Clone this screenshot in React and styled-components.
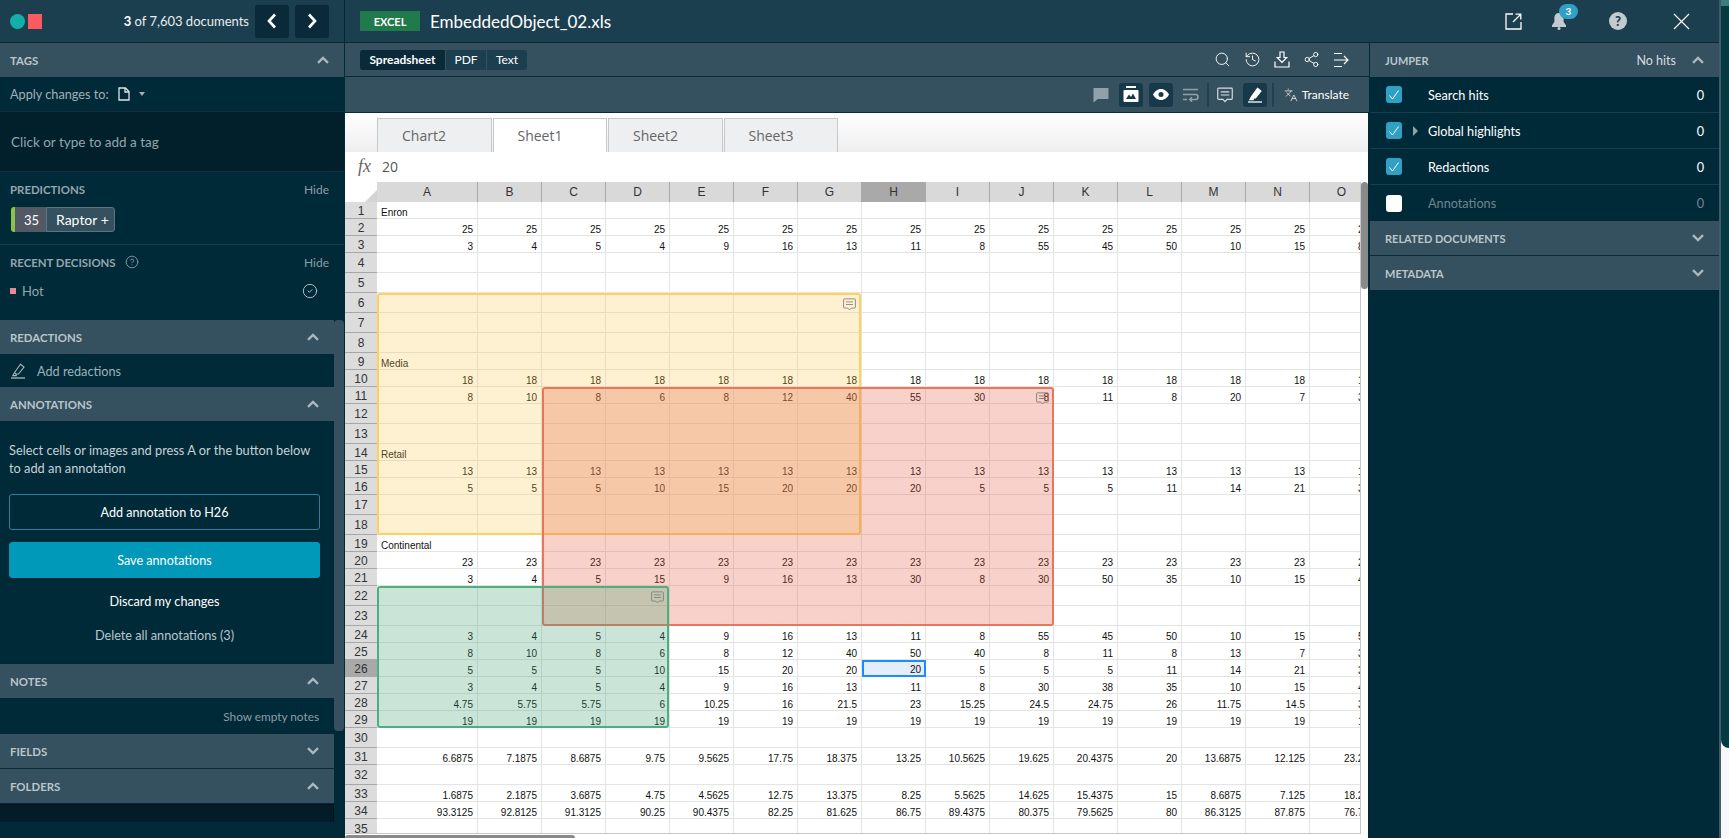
import React from "react";
import styled, { createGlobalStyle } from "styled-components";
import { CircleCheck, CircleHelp, History, Languages, Search, Share2 } from "lucide-react";

const GlobalStyle = createGlobalStyle`
  html, body {
    margin: 0;
    height: 100%;
    overflow: hidden;
    background: #fff;
  }
  #root {
    height: 100%;
  }
  * {
    box-sizing: border-box;
  }
`;

const DARK = "#012a39";
const BAR = "#1c3f50";
const HEAD = "#35505e";

const colLetters = "ABCDEFGHIJKLMNO".split("");

const rowHeights = [
  17, 17, 17, 20, 20, 20, 20, 20, 17, 17, 17, 20, 20, 17, 17, 17, 20, 20, 17, 17, 17, 20, 20, 17, 17, 17, 17, 17, 17, 20,
  17, 20, 17, 17, 20,
];

const fill = (v) => Array(15).fill(v);

// numbers from the sheet, keyed by row number
const cells = {
  2: fill(25),
  3: [3, 4, 5, 4, 9, 16, 13, 11, 8, 55, 45, 50, 10, 15, 80],
  10: fill(18),
  11: [8, 10, 8, 6, 8, 12, 40, 55, 30, 8, 11, 8, 20, 7, 30],
  15: fill(13),
  16: [5, 5, 5, 10, 15, 20, 20, 20, 5, 5, 5, 11, 14, 21, 30],
  20: fill(23),
  21: [3, 4, 5, 15, 9, 16, 13, 30, 8, 30, 50, 35, 10, 15, 40],
  24: [3, 4, 5, 4, 9, 16, 13, 11, 8, 55, 45, 50, 10, 15, 50],
  25: [8, 10, 8, 6, 8, 12, 40, 50, 40, 8, 11, 8, 13, 7, 30],
  26: [5, 5, 5, 10, 15, 20, 20, 20, 5, 5, 5, 11, 14, 21, 30],
  27: [3, 4, 5, 4, 9, 16, 13, 11, 8, 30, 38, 35, 10, 15, 40],
  28: [4.75, 5.75, 5.75, 6, 10.25, 16, 21.5, 23, 15.25, 24.5, 24.75, 26, 11.75, 14.5, 30],
  29: fill(19),
  31: [6.6875, 7.1875, 8.6875, 9.75, 9.5625, 17.75, 18.375, 13.25, 10.5625, 19.625, 20.4375, 20, 13.6875, 12.125, 23.25],
  33: [1.6875, 2.1875, 3.6875, 4.75, 4.5625, 12.75, 13.375, 8.25, 5.5625, 14.625, 15.4375, 15, 8.6875, 7.125, 18.25],
  34: [93.3125, 92.8125, 91.3125, 90.25, 90.4375, 82.25, 81.625, 86.75, 89.4375, 80.375, 79.5625, 80, 86.3125, 87.875, 76.75],
};

const labels = { 1: "Enron", 9: "Media", 14: "Retail", 19: "Continental" };

const Chevron = ({ up }) => (
  <svg width="12" height="8" viewBox="0 0 12 8" fill="none" stroke="#a9b8bf" strokeWidth="2.4">
    <path d={up ? "M1 6.8 6 2l5 4.8" : "M1 1.2 6 6l5-4.8"} />
  </svg>
);

const NavArrow = ({ right }) => (
  <svg width="10" height="16" viewBox="0 0 10 16" fill="none" stroke="#fff" strokeWidth="2.6">
    <path d={right ? "M2 1.5 8 8l-6 6.5" : "M8 1.5 2 8l6 6.5"} />
  </svg>
);

const DocIcon = () => (
  <svg width="12" height="14" viewBox="0 0 12 14" fill="none" stroke="#dfe5e8" strokeWidth="1.3">
    <path d="M1 1h6.5L11 4.5V13H1z" />
    <path d="M7 1v4h4" />
  </svg>
);

const HighlightIcon = ({ solid }) => (
  <svg width="16" height="16" viewBox="0 0 16 16" fill={solid ? "#fff" : "none"} stroke={solid ? "#fff" : "#a9b8bf"} strokeWidth="1.1">
    <path d="M10.5 1.2 14 4 8.5 11H5.5L4.7 9.2z" />
    <path d="M4.7 9.2 2.8 12.6h3.4l.4-1.2" />
    <path d="M1 15h14" strokeWidth="1.3" />
  </svg>
);

const CommentOutline = ({ size = 15, color = "#d5dde1" }) => (
  <svg width={size} height={size} viewBox="0 0 15 15" fill="none" stroke={color} strokeWidth="1.1">
    <path d="M1.5 1h12a.8.8 0 0 1 .8.8v9a.8.8 0 0 1-.8.8H9.5l-2 2.2-2-2.2h-4a.8.8 0 0 1-.8-.8v-9a.8.8 0 0 1 .8-.8z" />
    <path d="M3.5 4.5h8M3.5 7.5h8" />
  </svg>
);

const ExternalIcon = () => (
  <svg width="17" height="17" viewBox="0 0 17 17" fill="none" stroke="#fff" strokeWidth="1.3">
    <path d="M8 1H1v15h15V9" />
    <path d="M8 9 15.5 1.5M10.5 1.2h5.3v5.3" />
  </svg>
);

const BellIcon = () => (
  <svg width="16" height="18" viewBox="0 0 16 18" fill="#c3cbcf">
    <path d="M8 1C5 1 3.4 3.2 3.4 6.2v3.6L1 13.4V15h14v-1.6l-2.4-3.6V6.2C12.600 3.2 11 1 8 1z" />
    <circle cx="8" cy="16.400" r="1.500" />
  </svg>
);

const CloseIcon = () => (
  <svg width="17" height="17" viewBox="0 0 17 17" fill="none" stroke="#fff" strokeWidth="1.100">
    <path d="M1 1l15 15M16 1 1 16" />
  </svg>
);

const DownloadIcon = () => (
  <svg width="16" height="17" viewBox="0 0 16 17" fill="none" stroke="#fff" strokeWidth="1.200">
    <path d="M6 1h4v5.500h2.800L8 11.500 3.200 6.500H6z" />
    <path d="M1 10.500V16h14v-5.500" />
  </svg>
);

const ExitIcon = () => (
  <svg width="16" height="16" viewBox="0 0 16 16" fill="none" stroke="#fff" strokeWidth="1.200">
    <path d="M1 1.500h8M1 14.500h8M1 8h13.500M11 4l4 4-4 4" />
  </svg>
);

const FlagIcon = () => (
  <svg width="16" height="16" viewBox="0 0 16 16" fill="#8fa2ab">
    <path d="M.5 1h15v11H5l-4.500 3.500z" />
  </svg>
);

const ImageIcon = () => (
  <svg width="16" height="17" viewBox="0 0 16 17">
    <path d="M3 0h10v2H3z" fill="#fff" />
    <path d="M1.500 4h13a1 1 0 0 1 1 1v10a1 1 0 0 1-1 1h-13a1 1 0 0 1-1-1V5a1 1 0 0 1 1-1z" fill="#fff" />
    <path d="M3 13l3-4.500 2 2.500 2-3.500L13 13z" fill="#17394a" />
  </svg>
);

const EyeIcon = () => (
  <svg width="16" height="11" viewBox="0 0 16 11">
    <path d="M8 0c3.500 0 6.500 2.500 8 5.500-1.500 3-4.500 5.500-8 5.500S1.500 8.500 0 5.500C1.500 2.500 4.500 0 8 0z" fill="#fff" />
    <circle cx="8" cy="5.500" r="2.500" fill="#17394a" />
  </svg>
);

const WrapIcon = () => (
  <svg width="16" height="14" viewBox="0 0 16 14" fill="none" stroke="#8fa2ab" strokeWidth="1.600">
    <path d="M0 1.500h15M0 6.500h12.500a2.200 2.200 0 0 1 0 5H7M9 9.300 6.800 11.500 9 13.700M0 11.500h4" />
  </svg>
);

const Page = styled.div`
  display: flex;
  width: 1729px;
  height: 838px;
  overflow: hidden;
  font-family: Lato, "Open Sans", sans-serif;
  background: ${DARK};
`;

const Sidebar = styled.aside`
  display: flex;
  flex-direction: column;
  width: 344px;
  flex: none;
  background: ${DARK};
`;

const SideTop = styled.div`
  display: flex;
  align-items: center;
  height: 43px;
  flex: none;
  padding: 0 15px 0 10px;
  background: ${BAR};
  border-bottom: 1px solid #0b2a38;
`;

const LogoDot = styled.span`
  width: 15px;
  height: 15px;
  border-radius: 50%;
  background: #14b0a8;
`;

const LogoSquare = styled.span`
  width: 14px;
  height: 15px;
  margin-left: 3px;
  background: #fb5a60;
`;

const DocCount = styled.span`
  margin-left: auto;
  margin-right: 6px;
  color: #e8edef;
  font-size: 13px;
  b {
    color: #fff;
  }
`;

const NavButton = styled.button`
  display: flex;
  align-items: center;
  justify-content: center;
  width: 34px;
  height: 33px;
  margin-left: ${(p) => p.$gap || 0}px;
  padding: 0;
  border: none;
  border-radius: 3px;
  background: #0a2a3a;
`;

const SectionHeader = styled.div`
  display: flex;
  align-items: center;
  justify-content: space-between;
  height: 34px;
  flex: none;
  padding: 0 15px 0 ${(p) => p.$left || 10}px;
  background: ${HEAD};
  color: #b9c6cc;
  font-size: ${(p) => p.$size || 11.4}px;
  font-weight: 700;
  text-transform: uppercase;
`;

const HeaderRight = styled.span`
  display: flex;
  align-items: center;
  gap: 16px;
  color: #d5dde1;
  font-size: 12.5px;
  font-weight: 400;
  text-transform: none;
`;

const ApplyRow = styled.div`
  display: flex;
  align-items: center;
  gap: 9px;
  height: 35px;
  flex: none;
  padding: 0 10px;
  color: #9fb0b8;
  font-size: 12.7px;
  border-bottom: 1px solid #0f2f3e;
`;

const Caret = styled.span`
  width: 0;
  height: 0;
  border-left: 3.500px solid transparent;
  border-right: 3.500px solid transparent;
  border-top: 4px solid #9fb0b8;
`;

const TagInput = styled.div`
  display: flex;
  align-items: center;
  height: 60px;
  flex: none;
  padding: 0 11px;
  background: #021f2c;
  color: #93a5ae;
  font-size: 13.5px;
  border-bottom: 1px solid #10303f;
`;

const InfoBlock = styled.div`
  height: ${(p) => p.$h}px;
  flex: none;
  padding: 0 15px 0 10px;
  border-bottom: ${(p) => (p.$line ? "1px solid #1a3d4d" : "none")};
`;

const InfoTitle = styled.div`
  display: flex;
  align-items: center;
  justify-content: space-between;
  height: 34px;
  color: #93a5ae;
  font-size: 11.4px;
  font-weight: 700;
  text-transform: uppercase;
`;

const TitleLeft = styled.span`
  display: flex;
  align-items: center;
  gap: 9px;
`;

const HideLink = styled.span`
  color: #8b9ea7;
  font-size: 12px;
  font-weight: 400;
  text-transform: none;
`;

const Chip = styled.div`
  display: inline-flex;
  height: 25px;
  margin-top: 1px;
  margin-left: 1px;
  font-size: 13px;
  color: #fff;
`;

const ChipScore = styled.span`
  display: flex;
  align-items: center;
  justify-content: center;
  width: 35px;
  padding-left: 2px;
  border-left: 4px solid #8bc34a;
  border-radius: 3px 0 0 3px;
  background: #525864;
`;

const ChipName = styled.span`
  display: flex;
  align-items: center;
  gap: 6px;
  width: 69px;
  padding-left: 9px;
  border: 1px solid #5a7684;
  border-radius: 0 3px 3px 0;
  background: ${HEAD};
  font-size: 14px;
`;

const DecisionRow = styled.div`
  display: flex;
  align-items: center;
  justify-content: space-between;
  height: 24px;
  margin-top: 0;
  padding-right: 12px;
  color: #93a5ae;
  font-size: 13px;
`;

const DecisionName = styled.span`
  display: flex;
  align-items: center;
  gap: 6px;
`;

const HotMark = styled.i`
  width: 6px;
  height: 6px;
  background: #e58a9b;
`;

const ScrollArea = styled.div`
  display: flex;
  flex: 1;
  min-height: 0;
`;

const ScrollContent = styled.div`
  display: flex;
  flex-direction: column;
  width: 334px;
  flex: none;
`;

const ScrollThumb = styled.div`
  width: 10px;
  height: 411px;
  border-radius: 4px;
  background: ${HEAD};
`;

const AddRow = styled.div`
  display: flex;
  align-items: center;
  gap: 11px;
  height: 33px;
  flex: none;
  padding: 0 10px;
  color: #9fb0b8;
  font-size: 12.7px;
`;

const AnnotationBody = styled.div`
  display: flex;
  flex-direction: column;
  height: 243px;
  flex: none;
  padding: 21px 14px 0 9px;
  font-size: 12.8px;
`;

const HelpText = styled.p`
  margin: 0 0 17px;
  color: #c6d1d6;
  line-height: 17.500px;
`;

const WideButton = styled.button`
  height: 36px;
  flex: none;
  padding: 0;
  border-radius: 3px;
  border: 1px solid ${(p) => (p.$primary ? "#0199ba" : "#2a7f9c")};
  background: ${(p) => (p.$primary ? "#0199ba" : "transparent")};
  color: #fff;
  font-family: inherit;
  font-size: 12.6px;
  margin-bottom: 12px;
`;

const CenterLink = styled.div`
  margin-top: ${(p) => p.$top}px;
  text-align: center;
  line-height: 18px;
  color: ${(p) => p.$color};
  font-size: 12.7px;
`;

const NotesRow = styled.div`
  display: flex;
  align-items: center;
  justify-content: flex-end;
  height: 36px;
  flex: none;
  padding-right: 15px;
  color: #8b9ea7;
  font-size: 11.8px;
`;

const FolderBox = styled.div`
  height: 18px;
  flex: none;
  margin-top: 1px;
  background: #041c28;
  border-top: 1px solid #0c0f14;
  border-right: 1px solid #0c0f14;
`;

const Content = styled.div`
  display: flex;
  flex-direction: column;
  width: 1374px;
  flex: none;
  margin-left: 1px;
  background: ${DARK};
`;

const TopBar = styled.header`
  display: flex;
  align-items: center;
  height: 43px;
  flex: none;
  padding-left: 15px;
  background: ${BAR};
  border-bottom: 1px solid #0b2a38;
`;

const TypeBadge = styled.span`
  display: flex;
  align-items: center;
  justify-content: center;
  width: 60px;
  height: 20px;
  background: #217a4b;
  color: #fff;
  font-size: 11px;
  font-weight: 700;
`;

const FileName = styled.span`
  margin-left: 10px;
  color: #fff;
  font-size: 17px;
`;

const TopIcons = styled.div`
  display: flex;
  align-items: center;
  margin-left: auto;
  margin-right: 29px;
`;

const TopIcon = styled.span`
  position: relative;
  display: flex;
  align-items: center;
  justify-content: center;
  width: 18px;
  height: 18px;
  margin-left: ${(p) => p.$gap || 0}px;
`;

const BellBadge = styled.span`
  position: absolute;
  top: -8px;
  left: 9px;
  width: 19px;
  height: 15px;
  border-radius: 7.500px;
  background: #31a0c5;
  color: #fff;
  font-size: 10px;
  font-weight: 700;
  line-height: 15px;
  text-align: center;
`;

const HelpDot = styled.span`
  width: 18px;
  height: 18px;
  border-radius: 50%;
  background: #c3cbcf;
  color: ${BAR};
  font-size: 13px;
  font-weight: 900;
  line-height: 18px;
  text-align: center;
`;

const Body = styled.div`
  display: flex;
  flex: 1;
  min-height: 0;
`;

const Center = styled.main`
  display: flex;
  flex-direction: column;
  width: 1024px;
  flex: none;
`;

const ViewBar = styled.div`
  display: flex;
  align-items: center;
  height: 34px;
  flex: none;
  padding: 0 20px 0 15px;
  background: ${HEAD};
  border-bottom: 1px solid #0b2a38;
`;

const ViewTabs = styled.div`
  display: flex;
  gap: 1px;
`;

const ViewTab = styled.span`
  display: flex;
  align-items: center;
  justify-content: center;
  width: ${(p) => p.$w}px;
  height: 20px;
  border-radius: ${(p) => p.$r || "0"};
  background: ${(p) => (p.$active ? "#0a2a3a" : "#1c3f50")};
  color: #fff;
  font-size: 12px;
  font-weight: ${(p) => (p.$active ? 700 : 400)};
`;

const ToolIcons = styled.div`
  display: flex;
  align-items: center;
  margin-left: auto;
  gap: 13px;
`;

const ToolBar = styled.div`
  display: flex;
  align-items: center;
  justify-content: flex-end;
  height: 36px;
  flex: none;
  padding-right: 20px;
  background: ${HEAD};
  border-bottom: 1px solid #0b2a38;
`;

const ToolButton = styled.span`
  display: flex;
  align-items: center;
  justify-content: center;
  width: 24px;
  height: 24px;
  margin-left: ${(p) => p.$gap ?? 6}px;
  border-radius: 3px;
  background: ${(p) => (p.$on ? "#17394a" : "transparent")};
`;

const ToolSep = styled.i`
  width: 2px;
  height: 24px;
  margin-left: ${(p) => p.$gap ?? 6}px;
  background: #1f4252;
`;

const TranslateLabel = styled.span`
  display: flex;
  align-items: center;
  gap: 4px;
  margin-left: 10px;
  color: #fff;
  font-size: 12px;
`;

const Sheet = styled.section`
  position: relative;
  display: flex;
  flex-direction: column;
  flex: 1;
  min-height: 0;
  margin-right: 1px;
  background: #fff;
`;

const SheetTabs = styled.div`
  display: flex;
  align-items: flex-end;
  gap: 1px;
  height: 39px;
  flex: none;
  padding-left: 32px;
  background: linear-gradient(#fff, #eee);
`;

const SheetTab = styled.div`
  display: flex;
  align-items: center;
  width: 114.500px;
  height: 34px;
  padding-left: 24px;
  border: 1px solid #c6c8ca;
  border-bottom: none;
  background: ${(p) => (p.$active ? "#fff" : "#eeeff1")};
  color: #666;
  font-family: "Open Sans", sans-serif;
  font-size: 14px;
`;

const FxBar = styled.div`
  display: flex;
  align-items: center;
  height: 30px;
  flex: none;
  padding: 0 0 2px 13px;
  color: #555;
  font-family: "Open Sans", sans-serif;
  font-size: 14px;
`;

const FxMark = styled.i`
  width: 24px;
  color: #666;
  font-family: "Liberation Serif", serif;
  font-size: 18px;
`;

const GridRow = styled.div`
  display: flex;
  flex: 1;
  min-height: 0;
  margin-bottom: 4px;
`;

const GridWrap = styled.div`
  position: relative;
  width: 1016px;
  flex: none;
  overflow: hidden;
  border-right: 1px solid #c8c8c8;
  border-bottom: 1px solid #c8c8c8;
`;

const Table = styled.table`
  width: 1029px;
  table-layout: fixed;
  border-collapse: separate;
  border-spacing: 0;
  font-family: "Liberation Sans", Arial, sans-serif;
`;

const CornerCell = styled.th`
  position: relative;
  height: 20px;
  padding: 0;
  background: #fff;
  &::after {
    content: "";
    position: absolute;
    right: 0;
    bottom: 0;
    border-left: 12px solid transparent;
    border-bottom: 12px solid #d4d4d4;
  }
`;

const ColHead = styled.th`
  height: 20px;
  padding: 0;
  border-right: 1px solid #a8a8a8;
  background: ${(p) => (p.$on ? "#a9a9a9" : "#d9d9d9")};
  color: #333;
  font-size: 12px;
  font-weight: 400;
`;

const RowHead = styled.th`
  height: ${(p) => p.$h}px;
  padding: 2px 0 0;
  border-bottom: 1px solid #a8a8a8;
  background: ${(p) => (p.$on ? "#a9a9a9" : "#dcdcdc")};
  color: #333;
  font-size: 12px;
  line-height: 13px;
  font-weight: 400;
`;

const Cell = styled.td`
  height: ${(p) => p.$h}px;
  padding: 0 4px 0 4px;
  overflow: hidden;
  border-right: 1px solid #e4e4e4;
  border-bottom: 1px solid #e4e4e4;
  background: #fff;
  color: #111;
  font-size: 10px;
  line-height: 10px;
  text-align: ${(p) => (p.$left ? "left" : "right")};
  vertical-align: bottom;
  white-space: nowrap;
`;

const SelectedCell = styled(Cell)`
  border: 2px solid #1a8cff;
  background: #e3edfb;
  padding: 0 3px 0 4px;
`;

const Annotation = styled.div`
  position: absolute;
  left: ${(p) => p.$x}px;
  top: ${(p) => p.$y}px;
  width: ${(p) => p.$w}px;
  height: ${(p) => p.$h}px;
  border: 2px solid ${(p) => p.$line};
  border-radius: 3px;
  background: ${(p) => p.$bg};
`;

const NoteMark = styled.span`
  position: absolute;
  top: 3px;
  right: 3px;
  display: flex;
`;

const VScroll = styled.div`
  width: 7px;
  flex: none;
`;

const VThumb = styled.div`
  width: 7px;
  height: 107px;
  border-radius: 4px;
  background: #8a8a8a;
`;

const HThumb = styled.div`
  position: absolute;
  left: 0;
  bottom: 0;
  width: 230px;
  height: 3px;
  border-radius: 3px 3px 0 0;
  background: #8a8a8a;
`;

const Panel = styled.aside`
  display: flex;
  flex-direction: column;
  width: 349px;
  flex: none;
  margin-left: 1px;
  background: ${DARK};
`;

const JumpRow = styled.div`
  display: flex;
  align-items: center;
  height: 36px;
  flex: none;
  padding: 0 15px 0 16px;
  border-bottom: ${(p) => (p.$last ? "none" : "1px solid #1a3d4d")};
  color: ${(p) => (p.$off ? "#6f858f" : "#fff")};
  font-size: 12.7px;
`;

const CheckBox = styled.span`
  display: flex;
  align-items: center;
  justify-content: center;
  width: 16px;
  height: 17px;
  flex: none;
  border-radius: 3px;
  background: ${(p) => (p.$on ? "#31a0c5" : "#fff")};
`;

const Twist = styled.span`
  width: 0;
  height: 0;
  margin-left: 11px;
  border-top: 5px solid transparent;
  border-bottom: 5px solid transparent;
  border-left: 5px solid #8fa2ab;
`;

const JumpLabel = styled.span`
  margin-left: ${(p) => p.$gap}px;
`;

const JumpCount = styled.span`
  margin-left: auto;
`;

const HeadLine = styled.div`
  height: 1px;
  flex: none;
  background: #0b2a38;
`;

const EdgeStrip = styled.div`
  width: 10px;
  flex: none;
  border-left: 2px solid #3f5c68;
  background: #f8f8fc;
`;

const EdgeTeal = styled.div`
  height: 748px;
  border-top: 6px solid #3d7c7c;
  border-bottom-left-radius: 8px;
  background: #063a42;
`;

function Header({ title, up, right, left, size }) {
  return (
    <SectionHeader $left={left} $size={size}>
      {title}
      <HeaderRight>
        {right}
        <Chevron up={up} />
      </HeaderRight>
    </SectionHeader>
  );
}

function SheetGrid() {
  return (
    <Table>
      <colgroup>
        <col style={{ width: 32 }} />
        <col style={{ width: 101 }} />
        {colLetters.slice(1).map((c) => (
          <col key={c} style={{ width: 64 }} />
        ))}
      </colgroup>
      <thead>
        <tr>
          <CornerCell />
          {colLetters.map((c) => (
            <ColHead key={c} $on={c === "H"}>
              {c}
            </ColHead>
          ))}
        </tr>
      </thead>
      <tbody>
        {rowHeights.map((h, i) => {
          const n = i + 1;
          return (
            <tr key={n}>
              <RowHead $h={h} $on={n === 26}>
                {n}
              </RowHead>
              {colLetters.map((c, j) => {
                const Td = n === 26 && c === "H" ? SelectedCell : Cell;
                if (labels[n]) {
                  return (
                    <Td key={c} $h={h} $left>
                      {j === 0 ? labels[n] : ""}
                    </Td>
                  );
                }
                return (
                  <Td key={c} $h={h}>
                    {cells[n] ? cells[n][j] : ""}
                  </Td>
                );
              })}
            </tr>
          );
        })}
      </tbody>
    </Table>
  );
}

function Left() {
  return (
    <Sidebar>
      <SideTop>
        <LogoDot />
        <LogoSquare />
        <DocCount>
          <b>3</b> of 7,603 documents
        </DocCount>
        <NavButton>
          <NavArrow />
        </NavButton>
        <NavButton $gap={6}>
          <NavArrow right />
        </NavButton>
      </SideTop>
      <Header title="Tags" up />
      <ApplyRow>
        Apply changes to:
        <DocIcon />
        <Caret />
      </ApplyRow>
      <TagInput>Click or type to add a tag</TagInput>
      <InfoBlock $h={73} $line>
        <InfoTitle>
          Predictions
          <HideLink>Hide</HideLink>
        </InfoTitle>
        <Chip>
          <ChipScore>35</ChipScore>
          <ChipName>Raptor +</ChipName>
        </Chip>
      </InfoBlock>
      <InfoBlock $h={75}>
        <InfoTitle>
          <TitleLeft>
            Recent decisions
            <CircleHelp size={14} strokeWidth={1.4} />
          </TitleLeft>
          <HideLink>Hide</HideLink>
        </InfoTitle>
        <DecisionRow>
          <DecisionName>
            <HotMark />
            Hot
          </DecisionName>
          <CircleCheck size={16} strokeWidth={1.3} color="#c6d1d6" style={{ marginRight: -1 }} />
        </DecisionRow>
      </InfoBlock>
      <ScrollArea>
        <ScrollContent>
          <Header title="Redactions" up />
          <AddRow>
            <HighlightIcon />
            Add redactions
          </AddRow>
          <Header title="Annotations" up />
          <AnnotationBody>
            <HelpText>
              Select cells or images and press A or the button below
              <br />
              to add an annotation
            </HelpText>
            <WideButton>Add annotation to H26</WideButton>
            <WideButton $primary>Save annotations</WideButton>
            <CenterLink $top={2} $color="#fff">
              Discard my changes
            </CenterLink>
            <CenterLink $top={16} $color="#b9c6cc">
              Delete all annotations (3)
            </CenterLink>
          </AnnotationBody>
          <Header title="Notes" up />
          <NotesRow>Show empty notes</NotesRow>
          <Header title="Fields" />
          <HeadLine />
          <Header title="Folders" up />
          <FolderBox />
        </ScrollContent>
        <ScrollThumb />
      </ScrollArea>
    </Sidebar>
  );
}

function Middle() {
  return (
    <Center>
      <ViewBar>
        <ViewTabs>
          <ViewTab $w={85} $active $r="3px 0 0 3px">
            Spreadsheet
          </ViewTab>
          <ViewTab $w={40}>PDF</ViewTab>
          <ViewTab $w={40} $r="0 3px 3px 0">
            Text
          </ViewTab>
        </ViewTabs>
        <ToolIcons>
          <Search size={17} strokeWidth={1.3} color="#fff" />
          <History size={17} strokeWidth={1.3} color="#fff" />
          <DownloadIcon />
          <Share2 size={17} strokeWidth={1.3} color="#fff" />
          <ExitIcon />
        </ToolIcons>
      </ViewBar>
      <ToolBar>
        <FlagIcon />
        <ToolButton $on $gap={10}>
          <ImageIcon />
        </ToolButton>
        <ToolButton $on>
          <EyeIcon />
        </ToolButton>
        <ToolButton $gap={6}>
          <WrapIcon />
        </ToolButton>
        <ToolSep $gap={4} />
        <ToolButton $gap={4}>
          <CommentOutline size={16} />
        </ToolButton>
        <ToolButton $on $gap={6}>
          <HighlightIcon solid />
        </ToolButton>
        <ToolSep $gap={5} />
        <TranslateLabel>
          <Languages size={14} strokeWidth={1.2} color="#fff" />
          Translate
        </TranslateLabel>
      </ToolBar>
      <Sheet>
        <SheetTabs>
          <SheetTab>Chart2</SheetTab>
          <SheetTab $active>Sheet1</SheetTab>
          <SheetTab>Sheet2</SheetTab>
          <SheetTab>Sheet3</SheetTab>
        </SheetTabs>
        <FxBar>
          <FxMark>fx</FxMark>
          20
        </FxBar>
        <GridRow>
          <GridWrap>
            <SheetGrid />
            <Annotation $x={32} $y={111} $w={484} $h={242} $line="#fdd060" $bg="rgba(252, 200, 70, 0.25)">
              <NoteMark>
                <CommentOutline size={13} color="#8a8a80" />
              </NoteMark>
            </Annotation>
            <Annotation $x={197} $y={205} $w={512} $h={239} $line="#e8765f" $bg="rgba(228, 90, 60, 0.27)">
              <NoteMark>
                <CommentOutline size={13} color="#8a7a7a" />
              </NoteMark>
            </Annotation>
            <Annotation $x={32} $y={404} $w={292} $h={142} $line="#4daf80" $bg="rgba(60, 160, 110, 0.27)">
              <NoteMark>
                <CommentOutline size={13} color="#7a8a80" />
              </NoteMark>
            </Annotation>
          </GridWrap>
          <VScroll>
            <VThumb />
          </VScroll>
        </GridRow>
        <HThumb />
      </Sheet>
    </Center>
  );
}

function Right() {
  const check = (
    <svg width="12" height="12" viewBox="0 0 12 12" fill="none" stroke="#fff" strokeWidth="1">
      <path d="M1.500 6.500 4.500 10 10.500 1.500" />
    </svg>
  );
  return (
    <Panel>
      <Header title="Jumper" up right="No hits" left={15} size={11} />
      <JumpRow>
        <CheckBox $on>{check}</CheckBox>
        <JumpLabel $gap={26}>Search hits</JumpLabel>
        <JumpCount>0</JumpCount>
      </JumpRow>
      <JumpRow>
        <CheckBox $on>{check}</CheckBox>
        <Twist />
        <JumpLabel $gap={10}>Global highlights</JumpLabel>
        <JumpCount>0</JumpCount>
      </JumpRow>
      <JumpRow>
        <CheckBox $on>{check}</CheckBox>
        <JumpLabel $gap={26}>Redactions</JumpLabel>
        <JumpCount>0</JumpCount>
      </JumpRow>
      <JumpRow $off $last>
        <CheckBox />
        <JumpLabel $gap={26}>Annotations</JumpLabel>
        <JumpCount>0</JumpCount>
      </JumpRow>
      <Header title="Related documents" left={15} size={11} />
      <HeadLine />
      <Header title="Metadata" left={15} size={11} />
    </Panel>
  );
}

export default function App() {
  return (
    <>
      <GlobalStyle />
      <Page>
        <Left />
        <Content>
          <TopBar>
            <TypeBadge>EXCEL</TypeBadge>
            <FileName>EmbeddedObject_02.xls</FileName>
            <TopIcons>
              <TopIcon>
                <ExternalIcon />
              </TopIcon>
              <TopIcon $gap={28}>
                <BellIcon />
                <BellBadge>3</BellBadge>
              </TopIcon>
              <TopIcon $gap={41}>
                <HelpDot>?</HelpDot>
              </TopIcon>
              <TopIcon $gap={45}>
                <CloseIcon />
              </TopIcon>
            </TopIcons>
          </TopBar>
          <Body>
            <Middle />
            <Right />
          </Body>
        </Content>
        <EdgeStrip>
          <EdgeTeal />
        </EdgeStrip>
      </Page>
    </>
  );
}
